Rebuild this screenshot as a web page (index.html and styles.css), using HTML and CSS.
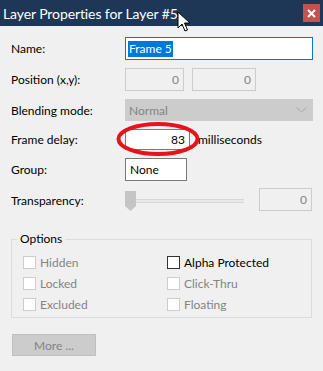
FILE: index.html
```html
<!DOCTYPE html>
<html lang="en">
<head>
    <meta charset="UTF-8">
    <title>Layer Properties for Layer #5</title>
    <link rel="stylesheet" href="styles.css">
</head>
<body>
    <div class="window">
        <div class="titlebar">
            <span class="title">Layer Properties for Layer #5</span>
            <button class="close-btn">
                <svg width="9" height="9" viewBox="0 0 9 9"><path d="M1 1 L8 8 M8 1 L1 8" stroke="#fff" stroke-width="2"/></svg>
            </button>
            <svg class="cursor" width="14" height="22" viewBox="0 0 14 22">
                <path d="M1 1 L1 17 L5 13 L8 20 L10.5 19 L7.5 12 L13 12 Z" fill="#fff" stroke="#000" stroke-width="1" stroke-linejoin="round"/>
            </svg>
        </div>

        <div class="content">
            <div class="fields">
                <label class="field-label">Name:</label>
                <div class="field">
                    <div class="input wide focused"><span class="selected">Frame 5</span></div>
                </div>

                <label class="field-label">Position (x,y):</label>
                <div class="field">
                    <div class="input disabled pos-x num">0</div>
                    <div class="input disabled pos-y num">0</div>
                </div>

                <label class="field-label">Blending mode:</label>
                <div class="field">
                    <div class="select">
                        <span>Normal</span>
                        <svg width="11" height="6" viewBox="0 0 11 6"><path d="M0.5 0.5 L5.5 5 L10.5 0.5" fill="none" stroke="#a8a8a8" stroke-width="1"/></svg>
                    </div>
                </div>

                <label class="field-label">Frame delay:</label>
                <div class="field">
                    <div class="input delay num">83</div>
                    <span class="unit">milliseconds</span>
                    <svg class="highlight" width="84" height="36" viewBox="0 0 84 36">
                        <ellipse cx="42" cy="18" rx="39.5" ry="15" fill="none" stroke="#e5141c" stroke-width="4"/>
                    </svg>
                </div>

                <label class="field-label">Group:</label>
                <div class="field">
                    <div class="input group">None</div>
                </div>

                <label class="field-label">Transparency:</label>
                <div class="field">
                    <div class="slider">
                        <svg class="thumb" width="11" height="20" viewBox="0 0 11 20"><path d="M0 0 H11 V15 L5.5 20 L0 15 Z" fill="#c5c5c5"/></svg>
                        <div class="track"></div>
                    </div>
                    <div class="input disabled trans num">0</div>
                </div>
            </div>

            <fieldset class="options">
                <legend>Options</legend>
                <div class="checks">
                    <label class="check disabled"><span class="box"></span>Hidden</label>
                    <label class="check"><span class="box"></span>Alpha Protected</label>
                    <label class="check disabled"><span class="box"></span>Locked</label>
                    <label class="check disabled"><span class="box"></span>Click-Thru</label>
                    <label class="check disabled"><span class="box"></span>Excluded</label>
                    <label class="check disabled"><span class="box"></span>Floating</label>
                </div>
            </fieldset>

            <button class="more-btn">More ...</button>
        </div>
    </div>
</body>
</html>
```

FILE: styles.css
```css
* {
    margin: 0;
    padding: 0;
    box-sizing: border-box;
}

body {
    font-family: Lato, "Noto Sans", sans-serif;
    font-size: 12px;
    color: #000;
    background: #f0f0f0;
    width: 323px;
    height: 371px;
    overflow: hidden;
}

.window {
    position: relative;
}

.titlebar {
    height: 26px;
    background: #1e3757;
    display: flex;
    align-items: center;
    padding-left: 3px;
    position: relative;
}

.title {
    color: #fff;
    font-size: 14px;
    letter-spacing: -0.1px;
    flex: 1;
    white-space: nowrap;
}

.close-btn {
    width: 17px;
    height: 18px;
    margin-right: 3px;
    background: #c75050;
    border: none;
    display: flex;
    align-items: center;
    justify-content: center;
}

.cursor {
    position: absolute;
    left: 177px;
    top: 11px;
}

.content {
    padding: 11px 10px 0 11px;
}

.fields {
    display: grid;
    grid-template-columns: 114px 1fr;
    grid-template-rows: 23px 23px 22px 21px 23px 23px;
    row-gap: 8px;
    align-items: center;
}

.field {
    display: flex;
    align-items: center;
    gap: 8px;
    height: 100%;
    position: relative;
}

.input {
    height: 100%;
    background: #fff;
    border: 1px solid #7a7a7a;
    padding: 0 4px;
    display: flex;
    align-items: center;
    white-space: nowrap;
}

.input.num {
    justify-content: flex-end;
}

.input.wide {
    width: 188px;
}

.input.focused {
    border-color: #0078d7;
    padding-left: 2px;
}

.selected {
    background: #0078d7;
    color: #fff;
    padding: 0 1px;
    line-height: 16px;
}

.input.disabled {
    background: #f0f0f0;
    border-color: #cccccc;
    color: #838383;
}

.pos-x {
    width: 59px;
}

.pos-y {
    width: 64px;
}

.select {
    width: 188px;
    height: 100%;
    background: #cccccc;
    border: 1px solid #cccccc;
    color: #838383;
    display: flex;
    align-items: center;
    justify-content: space-between;
    padding: 0 5px 0 3px;
}

.delay {
    width: 65px;
}

.highlight {
    position: absolute;
    left: -9px;
    top: -8px;
}

.group {
    width: 62px;
}

.slider {
    width: 119px;
    height: 20px;
    display: flex;
    align-items: center;
    margin-right: 7px;
}

.thumb {
    flex: none;
}

.track {
    flex: 1;
    height: 4px;
    background: #e7eae7;
    border-top: 1px solid #d6d6d6;
    border-bottom: 1px solid #d6d6d6;
}

.trans {
    width: 53px;
    height: 23px;
    margin-top: -2px;
}

.options {
    margin-top: 20px;
    margin-right: 1px;
    border: 1px solid #dcdcdc;
    height: 86px;
    padding: 9px 0 0 11px;
}

.options legend {
    margin-left: -6px;
    padding: 0 3px;
    line-height: 14px;
}

.checks {
    display: grid;
    grid-template-columns: 144px 1fr;
    row-gap: 7px;
}

.check {
    display: flex;
    align-items: center;
    gap: 4px;
    height: 14px;
    white-space: nowrap;
}

.check .box {
    width: 13px;
    height: 13px;
    background: #fff;
    border: 1px solid #333;
}

.check.disabled {
    color: #838383;
}

.check.disabled .box {
    border-color: #cccccc;
}

.more-btn {
    margin-top: 16px;
    margin-left: 1px;
    width: 84px;
    height: 22px;
    background: #cccccc;
    border: 1px solid #bfbfbf;
    color: #838383;
    font-family: inherit;
    font-size: 12px;
}
```
